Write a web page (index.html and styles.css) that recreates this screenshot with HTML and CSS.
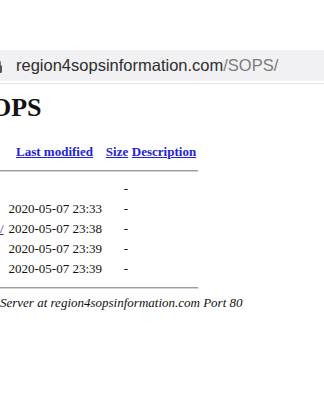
FILE: index.html
```html
<!DOCTYPE html>
<html lang="en">
<head>
    <meta charset="UTF-8">
    <meta name="viewport" content="width=device-width, initial-scale=1.0">
    <title>Index of /SOPS</title>
    <link rel="stylesheet" href="styles.css">
</head>
<body>
    <div class="toolbar">
        <div class="url-bar">
            <svg class="lock" width="12" height="14" viewBox="0 0 12 14">
                <path d="M3 6V4a3 3 0 0 1 6 0v2" fill="none" stroke="#555" stroke-width="1.5"/>
                <rect x="1" y="6" width="10" height="8" rx="1.5" fill="#555"/>
            </svg>
            <span class="host">region4sopsinformation.com</span><span class="path">/SOPS/</span>
        </div>
    </div>

    <div class="listing">
        <h1>OPS</h1>
        <table>
            <colgroup>
                <col class="col-name">
                <col class="col-date">
                <col class="col-size">
                <col class="col-desc">
            </colgroup>
            <tr class="head">
                <th></th>
                <th><a href="#">Last modified</a></th>
                <th><a href="#">Size</a></th>
                <th><a href="#">Description</a></th>
            </tr>
            <tr class="rule"><th colspan="4"><hr></th></tr>
            <tr>
                <td></td>
                <td class="num"></td>
                <td class="num">-</td>
                <td></td>
            </tr>
            <tr>
                <td></td>
                <td class="num">2020-05-07 23:33</td>
                <td class="num">-</td>
                <td></td>
            </tr>
            <tr>
                <td class="name"><a class="visited" href="#">/</a></td>
                <td class="num">2020-05-07 23:38</td>
                <td class="num">-</td>
                <td></td>
            </tr>
            <tr>
                <td></td>
                <td class="num">2020-05-07 23:39</td>
                <td class="num">-</td>
                <td></td>
            </tr>
            <tr>
                <td></td>
                <td class="num">2020-05-07 23:39</td>
                <td class="num">-</td>
                <td></td>
            </tr>
            <tr class="rule"><th colspan="4"><hr></th></tr>
        </table>
        <address>Server at region4sopsinformation.com Port 80</address>
    </div>
</body>
</html>
```

FILE: styles.css
```css
* {
    margin: 0;
    padding: 0;
    box-sizing: border-box;
}

body {
    font-family: 'Liberation Serif', 'Times New Roman', serif;
    font-size: 13px;
    color: #111;
    background-color: #fff;
    overflow: hidden;
}

.toolbar {
    margin-top: 50px;
    padding-bottom: 2px;
    border-bottom: 1px solid #e4e4e6;
}

.url-bar {
    height: 31px;
    background-color: #f1f1f3;
    display: flex;
    align-items: center;
    font-family: 'Liberation Sans', Arial, sans-serif;
    font-size: 16.5px;
    white-space: nowrap;
}

.lock {
    margin-left: -9px;
    margin-right: 13px;
    flex-shrink: 0;
}

.host {
    color: #2e2e2e;
}

.path {
    color: #7c7c7c;
}

.listing {
    padding-top: 9px;
}

h1 {
    font-size: 26px;
    line-height: 30px;
    font-weight: bold;
    margin-left: -9px;
    margin-bottom: 19px;
}

table {
    table-layout: fixed;
    width: 198px;
    border-spacing: 0;
}

.col-name { width: 5px; }
.col-date { width: 99px; }
.col-size { width: 26px; }
.col-desc { width: 68px; }

th, td {
    line-height: 20px;
    white-space: nowrap;
    padding: 0;
}

th {
    text-align: center;
    font-weight: bold;
}

th a {
    color: #2323d8;
}

td.num {
    text-align: right;
    padding-right: 2px;
}

td.name {
    text-align: right;
    padding-right: 2px;
    overflow: visible;
}

a.visited {
    color: #551a8b;
}

.rule th {
    height: 17px;
    line-height: 0;
    vertical-align: top;
    padding-top: 8px;
}

hr {
    border: 0;
    border-top: 1px solid #9c9c9c;
    border-bottom: 1px solid #d4d4d4;
    height: 2px;
}

address {
    font-style: italic;
    line-height: 14px;
}
```
